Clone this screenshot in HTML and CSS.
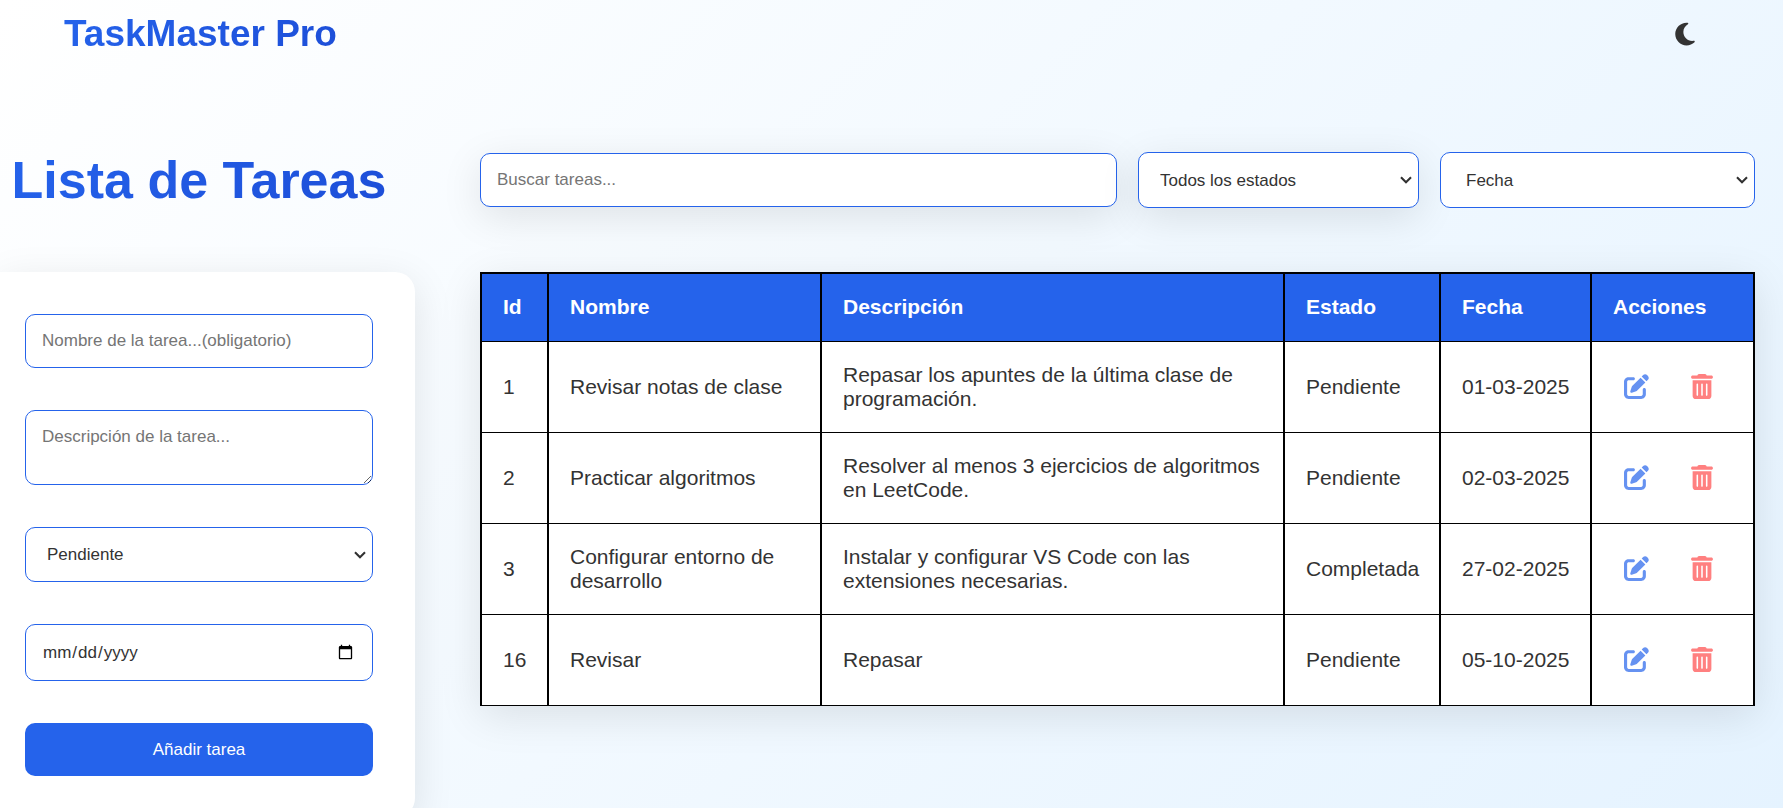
FILE: index.html
```html
<!DOCTYPE html>
<html lang="es">
<head>
<meta charset="utf-8">
<title>TaskMaster Pro</title>
<link rel="stylesheet" href="styles.css">
</head>
<body>
<svg class="sprite" aria-hidden="true">
  <symbol id="edit" viewBox="0 0 512 512"><path d="M471.6 21.7c-21.9-21.9-57.3-21.9-79.2 0L362.3 51.7l97.9 97.9 30.1-30.1c21.9-21.9 21.9-57.3 0-79.2L471.6 21.7zm-299.2 220c-6.1 6.1-10.8 13.6-13.5 21.9l-29.6 88.8c-2.9 8.6-.6 18.1 5.8 24.6s15.9 8.7 24.6 5.8l88.8-29.6c8.2-2.7 15.7-7.4 21.9-13.5L437.7 172.3 339.7 74.3 172.4 241.7zM96 64C43 64 0 107 0 160V416c0 53 43 96 96 96H352c53 0 96-43 96-96V320c0-17.7-14.3-32-32-32s-32 14.3-32 32v96c0 17.7-14.3 32-32 32H96c-17.7 0-32-14.3-32-32V160c0-17.7 14.3-32 32-32h96c17.7 0 32-14.3 32-32s-14.3-32-32-32H96z"/></symbol>
  <symbol id="trash" viewBox="0 0 448 512"><path d="M135.2 17.7C140.6 6.8 151.7 0 163.8 0H284.2c12.1 0 23.2 6.8 28.6 17.7L320 32h96c17.7 0 32 14.3 32 32s-14.3 32-32 32H32C14.3 96 0 81.7 0 64S14.3 32 32 32h96l7.2-14.3zM32 128H416V448c0 35.3-28.7 64-64 64H96c-35.3 0-64-28.7-64-64V128zm96 64c-8.8 0-16 7.2-16 16V432c0 8.8 7.2 16 16 16s16-7.2 16-16V208c0-8.8-7.2-16-16-16zm96 0c-8.8 0-16 7.2-16 16V432c0 8.8 7.2 16 16 16s16-7.2 16-16V208c0-8.8-7.2-16-16-16zm96 0c-8.8 0-16 7.2-16 16V432c0 8.8 7.2 16 16 16s16-7.2 16-16V208c0-8.8-7.2-16-16-16z"/></symbol>
</svg>
<header class="header">
  <div class="brand gradient-text">TaskMaster Pro</div>
  <button class="theme" type="button" aria-label="Cambiar tema"><svg viewBox="0 0 384 512"><path d="M223.5 32C100 32 0 132.3 0 256S100 480 223.5 480c60.6 0 115.5-24.2 155.8-63.4c5-4.9 6.3-12.5 3.1-18.7s-10.1-9.7-17-8.5c-9.8 1.7-19.8 2.6-30.1 2.6c-96.9 0-175.5-78.8-175.5-176c0-65.8 36-123.1 89.3-153.3c6.1-3.5 9.2-10.5 7.7-17.3s-7.3-11.9-14.3-12.5c-6.3-.5-12.6-.8-19-.8z"/></svg></button>
</header>
<main class="layout">
  <div class="heading"><h1 class="title gradient-text">Lista de Tareas</h1></div>
  <div class="filters">
    <input class="field shadow" type="text" placeholder="Buscar tareas..." aria-label="Buscar tareas">
    <select class="field status shadow" aria-label="Estado"><option>Todos los estados</option><option>Pendiente</option><option>Completada</option></select>
    <select class="field sort" aria-label="Ordenar"><option>Fecha</option><option>Nombre</option></select>
  </div>
  <form class="card shadow">
    <input class="field" type="text" placeholder="Nombre de la tarea...(obligatorio)" aria-label="Nombre de la tarea">
    <textarea class="field" rows="2" placeholder="Descripción de la tarea..." aria-label="Descripción de la tarea"></textarea>
    <select class="field" aria-label="Estado de la tarea"><option>Pendiente</option><option>Completada</option></select>
    <input class="field date" type="date" aria-label="Fecha">
    <button class="submit" type="button">Añadir tarea</button>
  </form>
  <div class="tasks">
    <table class="table shadow">
      <colgroup><col class="c-id"><col class="c-name"><col class="c-desc"><col class="c-state"><col class="c-date"><col class="c-act"></colgroup>
      <thead><tr><th>Id</th><th>Nombre</th><th>Descripción</th><th>Estado</th><th>Fecha</th><th>Acciones</th></tr></thead>
      <tbody>
        <tr><td>1</td><td>Revisar notas de clase</td><td>Repasar los apuntes de la última clase de programación.</td><td>Pendiente</td><td>01-03-2025</td><td><div class="actions"><button class="icon edit" type="button" aria-label="Editar"><svg><use href="#edit"/></svg></button><button class="icon trash" type="button" aria-label="Eliminar"><svg><use href="#trash"/></svg></button></div></td></tr>
        <tr><td>2</td><td>Practicar algoritmos</td><td>Resolver al menos 3 ejercicios de algoritmos en LeetCode.</td><td>Pendiente</td><td>02-03-2025</td><td><div class="actions"><button class="icon edit" type="button" aria-label="Editar"><svg><use href="#edit"/></svg></button><button class="icon trash" type="button" aria-label="Eliminar"><svg><use href="#trash"/></svg></button></div></td></tr>
        <tr><td>3</td><td>Configurar entorno de desarrollo</td><td>Instalar y configurar VS Code con las extensiones necesarias.</td><td>Completada</td><td>27-02-2025</td><td><div class="actions"><button class="icon edit" type="button" aria-label="Editar"><svg><use href="#edit"/></svg></button><button class="icon trash" type="button" aria-label="Eliminar"><svg><use href="#trash"/></svg></button></div></td></tr>
        <tr><td>16</td><td>Revisar</td><td>Repasar</td><td>Pendiente</td><td>05-10-2025</td><td><div class="actions"><button class="icon edit" type="button" aria-label="Editar"><svg><use href="#edit"/></svg></button><button class="icon trash" type="button" aria-label="Eliminar"><svg><use href="#trash"/></svg></button></div></td></tr>
      </tbody>
    </table>
  </div>
</main>
</body>
</html>
```
FILE: styles.css
```css
* { box-sizing: border-box; }
body {
  margin: 0;
  min-height: 100vh;
  font-family: "Liberation Sans", Arial, sans-serif;
  color: #333;
  background: linear-gradient(135deg, #fff, #e5f3ff);
}
.sprite { position: absolute; width: 0; height: 0; }
.header {
  display: flex;
  align-items: center;
  justify-content: space-between;
  height: 68px;
  padding: 0 88px 0 64px;
}
.gradient-text {
  background: linear-gradient(135deg, #2563eb, #1d4ed8);
  background-clip: text;
  -webkit-background-clip: text;
  color: transparent;
}
.brand { font-size: 37px; font-weight: 700; }
.theme { display: flex; padding: 0; border: 0; background: none; }
.theme svg { width: 20px; height: 26px; fill: #333; }
.layout {
  display: grid;
  grid-template-columns: 415px minmax(0, 1fr);
  gap: 64px 65px;
  padding: 84px 28px 0 0;
  align-items: start;
}
.heading { display: flex; justify-content: center; padding-right: 17px; }
.title { margin: 0; font-size: 52px; line-height: 56px; white-space: nowrap; }
.filters {
  display: grid;
  grid-template-columns: 637fr 281fr 315fr;
  gap: 21px;
  align-items: center;
}
.field {
  display: block;
  width: 100%;
  padding: 16px;
  border: 1px solid #2563eb;
  border-radius: 10px;
  background: #fff;
  color: #333;
  font: 17px "Liberation Sans", Arial, sans-serif;
}
.field::placeholder { color: #757575; }
input.field { height: 54px; }
select.field {
  height: 55px;
  padding: 0 30px 0 21px;
  appearance: none;
  background: #fff url("data:image/svg+xml,%3Csvg xmlns='http://www.w3.org/2000/svg' width='12' height='8'%3E%3Cpath d='M1 1.3l5 5 5-5' fill='none' stroke='%23333' stroke-width='2.1'/%3E%3C/svg%3E") no-repeat right 6px center;
}
.filters select.field { height: 56px; }
select.sort { padding-left: 25px; }
textarea.field { height: 75px; resize: vertical; }
input.date { height: 57px; }
.shadow { box-shadow: 0 10px 40px rgba(0, 0, 0, 0.1); }
.card {
  display: grid;
  gap: 42px;
  padding: 42px 42px 42px 25px;
  border-radius: 0 20px 20px 0;
  background: #fff;
}
.submit {
  height: 53px;
  border: 0;
  border-radius: 10px;
  background: #2563eb;
  color: #fff;
  font: 17px "Liberation Sans", Arial, sans-serif;
}
.table {
  width: 100%;
  table-layout: fixed;
  border-collapse: collapse;
  background: #fff;
  font-size: 21px;
  line-height: 24px;
}
.c-id { width: 67px; }
.c-name { width: 273px; }
.c-state { width: 156px; }
.c-date { width: 151px; }
.c-act { width: 163px; }
th, td {
  padding: 20px 16px 20px 21px;
  border: solid #000;
  border-width: 1px 2px;
  text-align: left;
}
th { height: 68px; border-top-width: 2px; background: #2563eb; color: #fff; }
td { height: 91px; }
.actions { display: flex; gap: 20px; }
.icon { display: flex; padding: 11px; border: 0; background: none; }
.icon svg { width: 25px; height: 25px; fill: #6692f1; }
.trash svg { width: 22px; fill: #ff8080; }
```
